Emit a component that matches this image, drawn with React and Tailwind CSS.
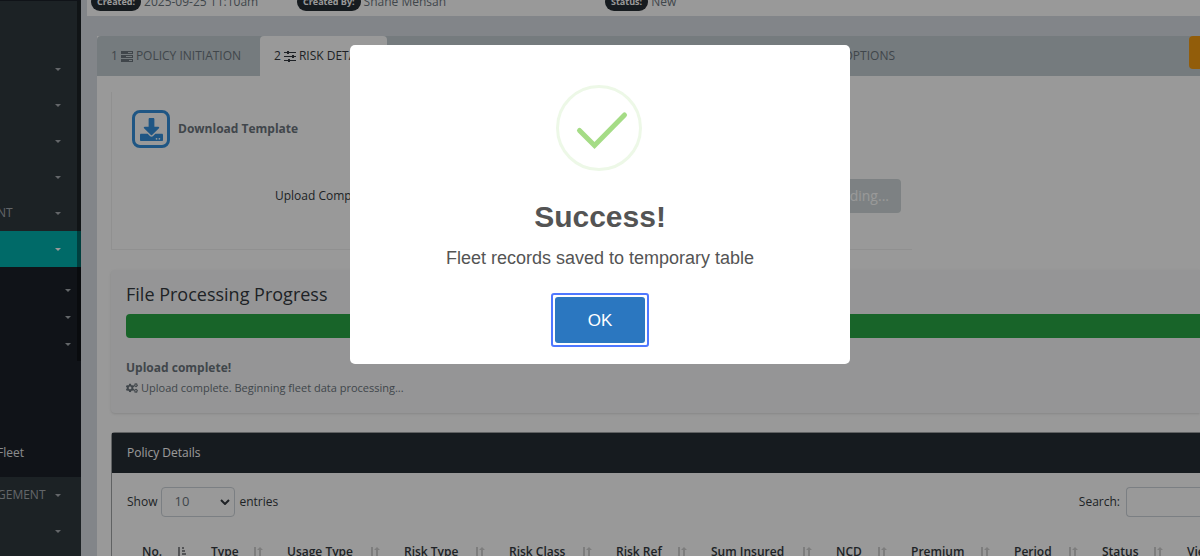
import { useState } from 'react'
import { FaCogs, FaDownload } from 'react-icons/fa'

const MENU_TOP = [
  { label: '' },
  { label: '' },
  { label: '' },
  { label: '' },
  { label: 'NT' },
  { label: '', active: true }
]

const COLUMNS = [
  { label: 'No.', width: 'w-[69px]', sorted: true },
  { label: 'Type', width: 'w-[76px]' },
  { label: 'Usage Type', width: 'w-[117px]' },
  { label: 'Risk Type', width: 'w-[105px]' },
  { label: 'Risk Class', width: 'w-[107px]' },
  { label: 'Risk Ref', width: 'w-[95px]' },
  { label: 'Sum Insured', width: 'w-[125px]' },
  { label: 'NCD', width: 'w-[75px]' },
  { label: 'Premium', width: 'w-[103px]' },
  { label: 'Period', width: 'w-[88px]' },
  { label: 'Status', width: 'w-[85px]' },
  { label: 'View', width: 'w-auto' }
]

function Caret() {
  return (
    <svg viewBox="0 0 6 3" className="h-[3px] w-[6px] shrink-0" fill="currentColor" aria-hidden="true">
      <path d="M0 0h6L3 3z" />
    </svg>
  )
}

function TasksIcon() {
  return (
    <svg viewBox="0 0 12 12" className="size-3 shrink-0" fill="currentColor" aria-hidden="true">
      <path fillRule="evenodd" d="M0 1h12v3H0zM7 2v1h4V2zM0 5h12v3H0zM5 6v1h6V6zM0 9h12v3H0zM8 10v1h3v-1z" />
    </svg>
  )
}

function SlidersIcon() {
  return (
    <svg viewBox="0 0 12 12" className="size-3 shrink-0" fill="currentColor" aria-hidden="true">
      <path d="M0 2h12v1H0zM3 1h2v3H3zM0 6h12v1H0zM8 5h2v3H8zM0 10h12v1H0zM4 9h2v3H4z" />
    </svg>
  )
}

function SortIcon({ sorted }) {
  if (sorted) {
    return (
      <svg viewBox="0 0 10 12" className="h-3 w-[10px] shrink-0 text-[#8a8d90]" fill="currentColor" aria-hidden="true">
        <path d="M1 1h2v10H1zM5 1h2v2H5zM5 4h3v2H5zM5 7h4v2H5zM5 10h5v1H5z" />
      </svg>
    )
  }
  return (
    <svg viewBox="0 0 10 12" className="h-3 w-[10px] shrink-0 text-[#d0d0d0]" fill="currentColor" aria-hidden="true">
      <path d="M1 1h2v10H1zM7 1l3 3H8v7H6V4H4z" />
    </svg>
  )
}

function MenuItem({ label, active }) {
  return (
    <li>
      <button
        type="button"
        aria-label={label || 'Menu section'}
        className={`flex h-9 w-full items-center justify-between pr-5 text-xs ${active ? 'bg-[#00b1ad] text-white' : 'text-[#a5abb0]'}`}
      >
        <span className="-ml-[3px]">{label}</span>
        <Caret />
      </button>
    </li>
  )
}

function Sidebar() {
  return (
    <aside className="relative w-[81px] shrink-0 overflow-hidden border-t border-[#1b2028] bg-[#30393f]">
      <ul className="pt-[50px]">
        {MENU_TOP.map((item, i) => (
          <MenuItem key={i} {...item} />
        ))}
        <li className="flex h-[210px] flex-col justify-between bg-[#1b2028] pt-[10px] pb-[14px] text-xs text-[#a5abb0]">
          <ul>
            {[0, 1, 2].map((i) => (
              <li key={i}>
                <button type="button" aria-label="Submenu" className="flex h-[27px] w-full items-center justify-end pr-[10px]">
                  <Caret />
                </button>
              </li>
            ))}
          </ul>
          <a href="#fleet" className="-ml-[3px] leading-5 text-[#e4e6e8]">Fleet</a>
        </li>
        <MenuItem label="GEMENT" />
        <MenuItem label="" />
      </ul>
      <div className="absolute top-0 right-0 h-[360px] w-1 bg-black/40" />
    </aside>
  )
}

function Meta({ label, value }) {
  return (
    <div className="flex items-center gap-[3px]">
      <span className="rounded-full bg-[#262d34] px-[6px] text-[9px] leading-[18px] font-bold text-white">{label}</span>
      <span className="text-xs leading-[18px] text-[#6c757d]">{value}</span>
    </div>
  )
}

function Tabs() {
  return (
    <div className="flex h-10 items-start rounded-tl bg-[#c3cdd2] text-xs text-[#6c757d]">
      <button type="button" className="flex h-10 w-[163px] items-center gap-[3px] pl-[14px]">
        1 <TasksIcon /> POLICY INITIATION
      </button>
      <button type="button" className="flex h-10 w-[127px] items-center gap-[3px] rounded-t bg-white pl-[14px] text-[#343a40]">
        2 <SlidersIcon /> RISK DETAILS
      </button>
      <button type="button" className="h-10 w-[508px] text-right">OPTIONS</button>
      <button type="button" aria-label="Actions" className="ml-auto h-[33px] w-[11px] rounded-l bg-[#f39c12]" />
    </div>
  )
}

function UploadCard() {
  return (
    <section className="flex h-[158px] max-w-[801px] flex-col gap-[31px] border-b border-l border-[#f0f0f0] pt-[18px]">
      <a href="#template" className="flex items-center gap-2 self-start pl-[20px] text-xs font-bold text-[#6c757d]">
        <span className="flex size-[38px] items-center justify-center rounded-lg border-3 border-[#3490dc] text-[#3490dc]">
          <FaDownload className="size-[23px]" />
        </span>
        Download Template
      </a>
      <div className="flex items-center justify-between pr-[11px] pl-[163px] text-xs text-[#343a40]">
        <span>Upload Complete</span>
        <button type="button" disabled className="h-[34px] rounded-sm bg-[#d0d8da] px-3 text-sm text-white">
          Uploading...
        </button>
      </div>
    </section>
  )
}

function ProgressCard() {
  return (
    <section className="mt-5 h-[143px] rounded-l bg-[#f8f9fa] pt-3 pl-[15px] shadow">
      <h2 className="text-lg leading-6 text-[#343a40]">File Processing Progress</h2>
      <div role="progressbar" aria-valuenow={100} className="mt-2 h-6 rounded-l bg-[#28a745]" />
      <p className="mt-5 text-xs leading-5 font-bold text-[#6c757d]">Upload complete!</p>
      <p className="flex items-center gap-[3px] text-[11px] leading-5 text-[#6c757d]">
        <FaCogs className="size-3" /> Upload complete. Beginning fleet data processing...
      </p>
    </section>
  )
}

function PolicyDetails() {
  return (
    <section className="mt-[19px] rounded-tl border-t border-l border-[#a0a3a6] text-xs text-[#343a40]">
      <h2 className="bg-[#262d34] pl-[15px] leading-10 text-white">Policy Details</h2>
      <div className="flex items-center justify-between pt-[14px] pl-[15px]">
        <label className="flex items-center gap-1">
          Show
          <span className="relative flex">
            <select className="h-[30px] w-[74px] appearance-none rounded-sm border border-[#ced4da] bg-white pl-3 text-[13px] text-[#6c757d]">
              <option>10</option>
              <option>25</option>
            </select>
            <svg viewBox="0 0 10 6" className="pointer-events-none absolute top-3 right-[5px] h-[6px] w-[10px]" fill="none" stroke="#343a40" strokeWidth="2">
              <path d="M1 1l4 4 4-4" />
            </svg>
          </span>
          entries
        </label>
        <label className="flex items-center gap-[6px]">
          Search:
          <input type="search" className="h-[30px] w-[74px] rounded-l-sm border border-r-0 border-[#ced4da] bg-white px-2" />
        </label>
      </div>
      <table className="mt-[27px] ml-[15px] w-[calc(100%-15px)] table-fixed text-left">
        <thead>
          <tr>
            {COLUMNS.map((col) => (
              <th key={col.label} className={`${col.width} pr-[9px] pl-[15px] font-semibold`}>
                <span className="flex items-center justify-between whitespace-nowrap">
                  {col.label}
                  <SortIcon sorted={col.sorted} />
                </span>
              </th>
            ))}
          </tr>
        </thead>
      </table>
    </section>
  )
}

function SuccessDialog({ onClose }) {
  return (
    <div className="fixed inset-0 flex items-start justify-center bg-black/40 pt-[45px]">
      <div role="dialog" aria-modal="true" className="flex w-[500px] flex-col items-center rounded-[5px] bg-white pt-10 pb-[17px] font-['Liberation_Sans',Arial,sans-serif]">
        <svg viewBox="0 0 88 88" className="size-[88px]" fill="none" aria-hidden="true">
          <circle cx="43" cy="43" r="41.5" stroke="#edf8e7" strokeWidth="3" />
          <path d="M23.5 45.5L38.5 60.5L68.5 30" stroke="#a5dc86" strokeWidth="5" strokeLinecap="round" />
        </svg>
        <h2 className="mt-6 text-[30px] leading-10 font-bold text-[#545454]">Success!</h2>
        <p className="mt-[9px] text-lg leading-6 text-[#545454]">Fleet records saved to temporary table</p>
        <button
          type="button"
          onClick={onClose}
          className="mt-[23px] h-[54px] w-[98px] rounded-[3px] border-2 border-[#4f78ff] bg-white p-[2px] text-[17px] text-white"
        >
          <span className="flex h-full items-center justify-center rounded-[3px] bg-[#2b77c0] pt-px">OK</span>
        </button>
      </div>
    </div>
  )
}

export default function App() {
  const [open, setOpen] = useState(true)

  return (
    <div className="flex h-screen overflow-hidden bg-[#d9dee4] font-['Open_Sans','Noto_Sans',sans-serif]">
      <Sidebar />
      <main className="flex min-w-0 flex-1 flex-col overflow-hidden">
        <header className="ml-[6px] flex h-4 shrink-0 items-end overflow-hidden bg-white pb-[5px] pl-1">
          <div className="w-[206px] shrink-0"><Meta label="Created:" value="2025-09-25 11:10am" /></div>
          <div className="w-[308px] shrink-0"><Meta label="Created By:" value="Shane Mensah" /></div>
          <Meta label="Status:" value="New" />
        </header>
        <div className="mt-5 ml-4 flex-1 bg-white">
          <Tabs />
          <div className="pt-4 pl-[14px]">
            <UploadCard />
            <ProgressCard />
            <PolicyDetails />
          </div>
        </div>
      </main>
      {open && <SuccessDialog onClose={() => setOpen(false)} />}
    </div>
  )
}
